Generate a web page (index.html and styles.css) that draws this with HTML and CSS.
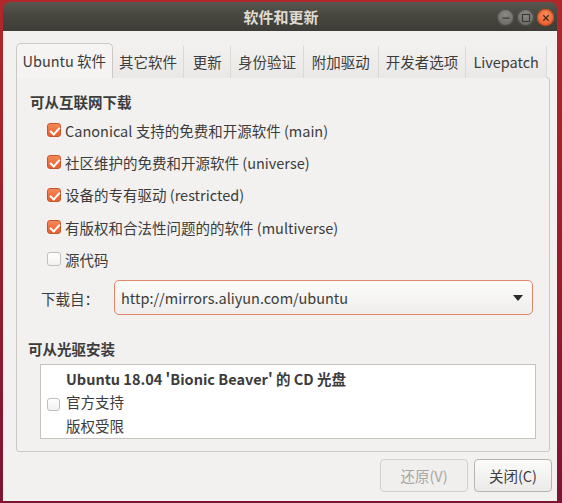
FILE: index.html
```html
<!DOCTYPE html>
<html lang="zh-CN">
<head>
<meta charset="utf-8">
<link rel="stylesheet" href="styles.css">
</head>
<body>
<div class="window">
  <div class="titlebar">
    <span class="title">软件和更新</span>
    <div class="controls">
      <span class="wbtn grey"><svg width="16" height="16" viewBox="0 0 16 16"><rect x="4.5" y="7.5" width="7" height="1.2" fill="#3a3935"/></svg></span>
      <span class="wbtn grey"><svg width="16" height="16" viewBox="0 0 16 16"><rect x="4.5" y="4.5" width="7" height="7" fill="none" stroke="#3a3935" stroke-width="1.1"/></svg></span>
      <span class="wbtn close"><svg width="16" height="16" viewBox="0 0 16 16"><path d="M5.3 5.3 L10.7 10.7 M10.7 5.3 L5.3 10.7" stroke="#4a2a1c" stroke-width="1.3"/></svg></span>
    </div>
  </div>
  <div class="content">
    <div class="tabs">
      <div class="tab active t1">Ubuntu 软件</div>
      <div class="tab t2">其它软件</div>
      <div class="tab t3">更新</div>
      <div class="tab t4">身份验证</div>
      <div class="tab t5">附加驱动</div>
      <div class="tab t6">开发者选项</div>
      <div class="tab t7">Livepatch</div>
    </div>
    <div class="panel">
      <div class="heading">可从互联网下载</div>
      <div class="checks">
        <div class="row"><span class="cb on"></span>Canonical 支持的免费和开源软件 (main)</div>
        <div class="row"><span class="cb on"></span>社区维护的免费和开源软件 (universe)</div>
        <div class="row"><span class="cb on"></span>设备的专有驱动 (restricted)</div>
        <div class="row"><span class="cb on"></span>有版权和合法性问题的的软件 (multiverse)</div>
        <div class="row"><span class="cb"></span>源代码</div>
      </div>
      <div class="source">
        <span class="label">下载自：</span>
        <div class="combo"><span>http://mirrors.aliyun.com/ubuntu</span><span class="arrow"></span></div>
      </div>
      <div class="heading h2">可从光驱安装</div>
      <div class="listbox">
        <span class="cb small"></span>
        <div class="cdtext">
          <div class="cdtitle">Ubuntu 18.04 'Bionic Beaver' 的 CD 光盘</div>
          <div>官方支持</div>
          <div>版权受限</div>
        </div>
      </div>
    </div>
    <div class="buttons">
      <button class="btn disabled revert">还原(V)</button>
      <button class="btn closebtn">关闭(C)</button>
    </div>
  </div>
</div>
</body>
</html>
```

FILE: styles.css
```css
* { box-sizing: border-box; }
html, body { margin: 0; padding: 0; }
body {
  width: 562px;
  height: 503px;
  overflow: hidden;
  background: linear-gradient(180deg, #b0282a 0%, #9a1e2a 50%, #7d1433 100%);
  font-family: "Noto Sans CJK SC", "Noto Sans", sans-serif;
  font-size: 14.5px;
  color: #3c3c3c;
}
.window {
  margin: 2px 5px 0 3px;
  width: 554px;
  height: 499px;
  display: flex;
  flex-direction: column;
  border-radius: 7px 7px 0 0;
  overflow: hidden;
}
.titlebar {
  height: 29px;
  flex: none;
  background: linear-gradient(180deg, #57564f 0%, #48473f 45%, #3d3c37 100%);
  position: relative;
  display: flex;
  align-items: center;
  justify-content: center;
}
.title {
  color: #dfdbd2;
  font-weight: bold;
  font-size: 15px;
  line-height: 1;
  margin-left: 2px;
}
.controls {
  position: absolute;
  right: 3px;
  top: 7px;
  display: flex;
  gap: 3px;
}
.wbtn {
  width: 17px;
  height: 17px;
  border-radius: 50%;
  display: flex;
  align-items: center;
  justify-content: center;
}
.wbtn.grey {
  background: radial-gradient(circle at 50% 35%, #8a8983 0%, #6e6d68 70%, #5d5c57 100%);
  box-shadow: inset 0 0 0 1px #4a4944;
}
.wbtn.close {
  background: radial-gradient(circle at 50% 35%, #f68a5c 0%, #ee6233 70%, #d8501f 100%);
  box-shadow: inset 0 0 0 1px #c04a1c;
}
.content {
  flex: 1;
  background: #f2f1f0;
  padding: 13px 10px 0 13px;
  display: flex;
  flex-direction: column;
}
.tabs {
  display: flex;
  height: 34px;
  align-items: flex-end;
  position: relative;
  z-index: 1;
  margin-bottom: -1px;
}
.tab {
  height: 32px;
  display: flex;
  align-items: center;
  justify-content: center;
  border-right: 1px solid #dcd8d4;
  background: linear-gradient(180deg, #f2f1f0, #eae8e6);
  color: #3c3c3c;
  font-size: 14.5px;
  padding-bottom: 2px;
}
.tab.active {
  height: 35px;
  background: #f5f4f3;
  border: 1px solid #cdc8c3;
  border-bottom: none;
  border-radius: 5px 5px 0 0;
}
.t1 { width: 97px; }
.t2 { width: 72px; }
.t3 { width: 47px; }
.t4 { width: 73px; }
.t5 { width: 75px; }
.t6 { width: 88px; }
.t7 { width: 81px; border-right: 1px solid #dcd8d4; }
.panel {
  width: 534px;
  height: 375px;
  flex: none;
  border: 1px solid #cdc8c3;
  border-radius: 0 3px 3px 3px;
  background: #f2f1f0;
  padding: 14px 0 0 13px;
  display: flex;
  flex-direction: column;
  align-items: flex-start;
}
.heading {
  font-weight: bold;
  line-height: 20px;
  height: 20px;
}
.checks {
  margin-top: 2px;
  padding-left: 17px;
  display: flex;
  flex-direction: column;
}
.row {
  height: 32.3px;
  display: flex;
  align-items: center;
}
.cb {
  width: 14px;
  height: 14px;
  border-radius: 3px;
  border: 1px solid #c2bdb8;
  background: linear-gradient(180deg, #ffffff, #f2f1f0);
  margin-right: 4px;
  flex: none;
  position: relative;
}
.cb.on {
  border-color: #c8542a;
  background: linear-gradient(180deg, #f58757, #e8602e);
}
.cb.on::after {
  content: "";
  position: absolute;
  left: 3.5px;
  top: 1px;
  width: 4px;
  height: 8px;
  border: solid #ffffff;
  border-width: 0 2px 2px 0;
  transform: rotate(42deg);
}
.source {
  margin-top: 5px;
  display: flex;
  align-items: center;
  padding-left: 11px;
}
.label {
  width: 73px;
  flex: none;
  margin-top: 2px;
}
.combo {
  width: 419px;
  height: 35px;
  border: 1px solid #e0866a;
  border-radius: 5px;
  background: linear-gradient(180deg, #fbfbfa, #efeeec);
  display: flex;
  align-items: center;
  justify-content: space-between;
  padding: 0 9px 0 6px;
}
.arrow {
  width: 0;
  height: 0;
  border-left: 5px solid transparent;
  border-right: 5px solid transparent;
  border-top: 6px solid #2b2b2b;
}
.h2 {
  margin-top: 24px;
  margin-left: -2px;
}
.listbox {
  margin-top: 5px;
  margin-left: 10px;
  width: 496px;
  height: 75px;
  background: #ffffff;
  border: 1px solid #c6c3bf;
  display: flex;
  align-items: center;
  padding-left: 6px;
}
.cb.small {
  width: 13px;
  height: 13px;
  margin-right: 6px;
  margin-top: 6px;
}
.cdtext {
  display: flex;
  flex-direction: column;
  line-height: 23.5px;
}
.cdtitle { font-weight: bold; }
.buttons {
  display: flex;
  justify-content: flex-end;
  gap: 6px;
  margin-top: 7px;
  margin-right: -5px;
}
.btn {
  height: 33px;
  border-radius: 4px;
  border: 1px solid #b9b4af;
  background: linear-gradient(180deg, #fbfbfa, #ebeae8);
  font-family: inherit;
  font-size: 14.5px;
  color: #3c3c3c;
  padding: 0;
}
.revert { width: 88px; }
.closebtn { width: 78px; }
.btn.disabled {
  color: #a7a6a4;
  border-color: #d3cfcb;
  background: #f0efee;
}
```
